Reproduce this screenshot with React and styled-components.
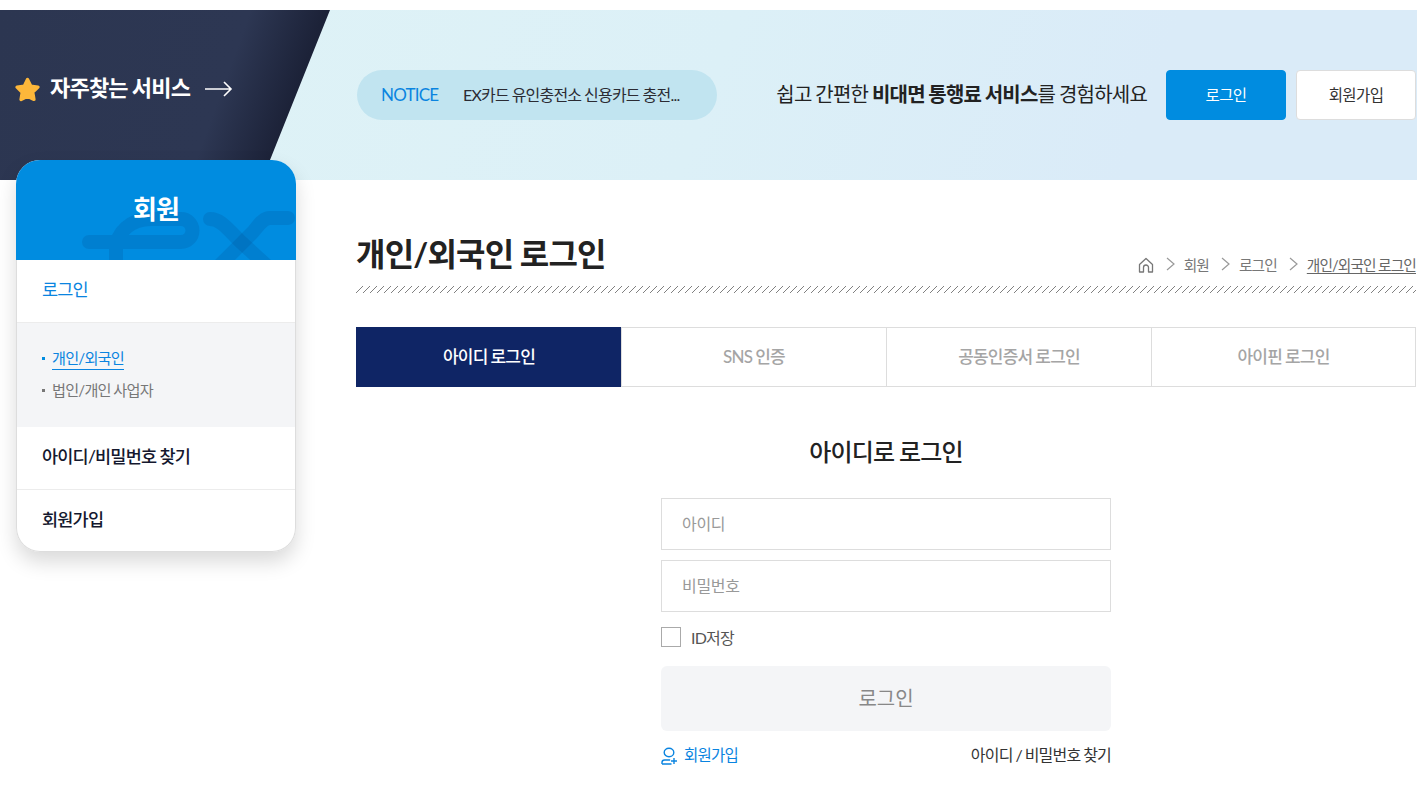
import React from "react";
import styled, {createGlobalStyle} from "styled-components";

const GlobalStyle = createGlobalStyle`
  html, body {
    margin: 0;
    padding: 0;
    background: #fff;
    overflow: hidden;
  }
  body {
    font-family: Lato, "Noto Sans CJK KR", sans-serif;
    color: #222;
    letter-spacing: -0.05em;
    word-spacing: -0.03em;
  }
  * { box-sizing: border-box; }
`

const Page = styled.div`
  width: 1417px;
  height: 785px;
  padding-top: 10px;
`

const Banner = styled.div`
  height: 170px;
  display: flex;
  align-items: center;
  background: linear-gradient(110deg, #dff3f6 0%, #dcf0f7 50%, #daebf8 80%, #daebf8 100%);
`

const Quick = styled.div`
  width: 330px;
  height: 100%;
  flex: none;
  display: flex;
  align-items: center;
  padding: 0 0 12px 13px;
  clip-path: polygon(0 0, 100% 0, 262px 100%, 0 100%);
  background: linear-gradient(110deg, #2c3651 0%, #2d3753 64%, #1c2238 83%, #1c2238 100%);
`

const QuickText = styled.span`
  margin-left: 8px;
  padding-bottom: 6px;
  font-size: 22px;
  font-weight: 700;
  color: #fff;
`

const QuickArrow = styled.svg`
  margin-left: 15px;
`

const Notice = styled.div`
  margin-left: 27px;
  width: 360px;
  height: 50px;
  flex: none;
  display: flex;
  align-items: center;
  padding: 0 24px 2px 24px;
  border-radius: 25px;
  background: #c1e4f0;
  font-size: 16px;
`

const NoticeLabel = styled.span`
  color: #0a84e0;
  width: 82px;
  flex: none;
  font-size: 17px;
`

const NoticeText = styled.span`
  color: #2b2b33;
  white-space: nowrap;
`

const Intro = styled.div`
  margin-left: auto;
  padding-bottom: 3px;
  font-size: 20px;
  color: #222;
  white-space: nowrap;

  b {
    font-weight: 700;
  }
`

const TopButton = styled.button`
  width: 120px;
  height: 50px;
  margin-left: ${p => (p.$primary ? "19px" : "10px")};
  padding-bottom: 3px;
  flex: none;
  border-radius: 4px;
  border: 1px solid ${p => (p.$primary ? "#008ce0" : "#ddd")};
  background: ${p => (p.$primary ? "#008ce0" : "#fff")};
  color: ${p => (p.$primary ? "#fff" : "#333")};
  font: inherit;
  font-size: 15.5px;
  letter-spacing: -0.04em;
`

const TopActions = styled.div`
  display: flex;
  padding-right: 1px;
`

const Body = styled.div`
  display: flex;
  align-items: flex-start;
`

const Side = styled.aside`
  width: 280px;
  flex: none;
  margin: -20px 0 0 16px;
  position: relative;
  border-radius: 24px;
  background: #fff;
  box-shadow: 0 10px 20px rgba(0, 0, 0, 0.15);
`

const SideHead = styled.div`
  height: 100px;
  position: relative;
  overflow: hidden;
  padding-top: 29px;
  border-radius: 24px 24px 0 0;
  background: #008ce0;
  color: #fff;
  font-size: 26px;
  font-weight: 700;
  line-height: 40px;
  text-align: center;
`

const SideLogo = styled.svg`
  position: absolute;
  left: 0;
  top: 0;
`

const SideTitle = styled.span`
  position: relative;
`

const SideList = styled.div`
  border: 1px solid #ddd;
  border-top: 0;
  border-radius: 0 0 24px 24px;
  overflow: hidden;
`

const SideRow = styled.div`
  height: ${p => p.$height}px;
  display: flex;
  align-items: center;
  padding: 0 0 ${p => p.$pad}px 25px;
  font-size: 17.5px;
  font-weight: ${p => (p.$active ? 400 : 500)};
  color: ${p => (p.$active ? "#0a84e0" : "#14182e")};
  border-bottom: ${p => (p.$line ? "1px solid #ececec" : "0")};
`

const SubList = styled.div`
  height: 104px;
  padding: 19px 0 0 25px;
  background: #f4f5f7;
`

const SubItem = styled.div`
  height: 32px;
  display: flex;
  align-items: center;
  font-size: 15.2px;
  color: ${p => (p.$active ? "#0a84e0" : "#777")};

  &::before {
    content: "";
    width: 3px;
    height: 3px;
    margin-right: 7px;
    background: ${p => (p.$active ? "#008ce0" : "#777")};
  }

  span {
    line-height: 22px;
    border-bottom: ${p => (p.$active ? "1px solid #0a84e0" : "1px solid transparent")};
  }
`

const Main = styled.main`
  width: 1060px;
  margin-left: 60px;
  padding-top: 51px;
`

const TitleRow = styled.div`
  display: flex;
  align-items: flex-start;
  justify-content: space-between;
  height: 55px;
`

const Title = styled.h1`
  margin: 0;
  font-size: 32px;
  font-weight: 700;
  line-height: 46px;
  color: #222;
`

const Crumbs = styled.div`
  display: flex;
  align-items: center;
  height: 24px;
  margin-top: 21px;
  font-size: 14.7px;
  letter-spacing: -0.06em;
  color: #777;
`

const CrumbHome = styled.svg`
  margin-bottom: -2px;
`

const CrumbArrow = styled.svg`
  margin: 0 9px 0 12px;
`

const CrumbLast = styled.span`
  color: #666;
  text-decoration: underline;
  text-underline-offset: 2px;
`

const Hatch = styled.div`
  height: 7px;
  background: linear-gradient(135deg, transparent 44%, #808080 44% 56%, transparent 56%) 0 0 / 7px 7px repeat-x;
`

const Tabs = styled.div`
  display: flex;
  margin-top: 34px;
`

const Tab = styled.div`
  width: 265px;
  height: 60px;
  display: flex;
  align-items: center;
  justify-content: center;
  padding-bottom: 3px;
  font-size: 17px;
  font-weight: 500;
  border: 1px solid ${p => (p.$active ? "#0f2565" : "#ddd")};
  border-right-width: ${p => (p.$last ? "1px" : "0")};
  background: ${p => (p.$active ? "#0f2565" : "#fff")};
  color: ${p => (p.$active ? "#fff" : "#a5a5a5")};
`

const LoginBox = styled.div`
  width: 450px;
  margin: 0 0 0 305px;
`

const LoginTitle = styled.h2`
  margin: 47px 0 28px;
  font-size: 24px;
  font-weight: 500;
  line-height: 36px;
  text-align: center;
  color: #222;
`

const Field = styled.input`
  display: block;
  width: 100%;
  height: 52px;
  margin-bottom: 10px;
  padding: 0 20px 2px;
  border: 1px solid #ddd;
  border-radius: 0;
  outline: 0;
  font: inherit;
  font-size: 16px;
  letter-spacing: -0.02em;

  &::placeholder {
    color: #999;
    opacity: 1;
  }
`

const SaveRow = styled.label`
  display: flex;
  align-items: center;
  margin-top: 15px;
  height: 20px;
  font-size: 16px;
  color: #555;
`

const CheckBox = styled.span`
  width: 20px;
  height: 20px;
  margin-right: 10px;
  border: 1px solid #aaa;
  background: #fff;
`

const LoginButton = styled.button`
  display: block;
  width: 100%;
  height: 65px;
  margin-top: 19px;
  padding-bottom: 3px;
  border: 0;
  border-radius: 6px;
  background: #f4f5f7;
  color: #888;
  font: inherit;
  font-size: 20px;
  letter-spacing: 0;
`

const LinkRow = styled.div`
  display: flex;
  align-items: center;
  justify-content: space-between;
  margin-top: 12px;
  height: 22px;
  font-size: 16px;
`

const JoinLink = styled.span`
  display: flex;
  align-items: center;
  gap: 5px;
  font-size: 15.5px;
  color: #0a84e0;
`

const FindLink = styled.span`
  color: #333;
`

const JoinIcon = styled.svg`
  margin-top: 4px;
`

const Star = () => (
  <svg width="29" height="29" viewBox="0 0 26 26">
    <path
      d="M13 4l2.9 5.9 6.5.9-4.7 4.6 1.1 6.5L13 19l-5.8 3 1.1-6.5-4.7-4.6 6.5-.9z"
      fill="#fdb73a"
      stroke="#fdb73a"
      strokeWidth="3"
      strokeLinejoin="round"
    />
  </svg>
)

const Chevron = () => (
  <CrumbArrow width="9" height="14" viewBox="0 0 9 14">
    <path d="M1 1l7 6-7 6" fill="none" stroke="#999" strokeWidth="1.2" />
  </CrumbArrow>
)

export default function App() {
  return (
    <Page>
      <GlobalStyle />
      <Banner>
        <Quick>
          <Star />
          <QuickText>자주찾는 서비스</QuickText>
          <QuickArrow width="28" height="16" viewBox="0 0 28 16">
            <path d="M0 8h26M19 1l7 7-7 7" fill="none" stroke="#fff" strokeWidth="1.6" />
          </QuickArrow>
        </Quick>
        <Notice>
          <NoticeLabel>NOTICE</NoticeLabel>
          <NoticeText>EX카드 유인충전소 신용카드 충전...</NoticeText>
        </Notice>
        <Intro>쉽고 간편한 <b>비대면 통행료 서비스</b>를 경험하세요</Intro>
        <TopActions>
          <TopButton $primary>로그인</TopButton>
          <TopButton>회원가입</TopButton>
        </TopActions>
      </Banner>
      <Body>
        <Side>
          <SideHead>
            <SideLogo width="280" height="100" viewBox="0 0 280 100">
              <g fill="none" stroke="#00407a" strokeOpacity="0.16" strokeWidth="14" strokeLinecap="round">
                <path d="M73 82H165A11.5 11.5 0 0 0 165 59H135C115 59 100 72 100 90V110" />
                <path d="M194 59C206 59 214 72 226 83L250 105" />
                <path d="M272 58H254C246 58 241 68 236 73L205 104" />
              </g>
            </SideLogo>
            <SideTitle>회원</SideTitle>
          </SideHead>
          <SideList>
            <SideRow $active $height={63} $pad={6} $line>로그인</SideRow>
            <SubList>
              <SubItem $active><span>개인/외국인</span></SubItem>
              <SubItem><span>법인/개인 사업자</span></SubItem>
            </SubList>
            <SideRow $height={63} $pad={6} $line>아이디/비밀번호 찾기</SideRow>
            <SideRow $height={61} $pad={4}>회원가입</SideRow>
          </SideList>
        </Side>
        <Main>
          <TitleRow>
            <Title>개인/외국인 로그인</Title>
            <Crumbs>
              <CrumbHome width="16" height="16" viewBox="0 0 16 16">
                <path d="M1.5 7.5L8 1.5l6.5 6V15h-4v-4.5a2.5 2.5 0 0 0-5 0V15h-4z" fill="none" stroke="#777" strokeWidth="1.3" strokeLinejoin="round" />
              </CrumbHome>
              <Chevron />
              <span>회원</span>
              <Chevron />
              <span>로그인</span>
              <Chevron />
              <CrumbLast>개인/외국인 로그인</CrumbLast>
            </Crumbs>
          </TitleRow>
          <Hatch />
          <Tabs>
            <Tab $active>아이디 로그인</Tab>
            <Tab>SNS 인증</Tab>
            <Tab>공동인증서 로그인</Tab>
            <Tab $last>아이핀 로그인</Tab>
          </Tabs>
          <LoginBox>
            <LoginTitle>아이디로 로그인</LoginTitle>
            <Field placeholder="아이디" />
            <Field placeholder="비밀번호" />
            <SaveRow><CheckBox />ID저장</SaveRow>
            <LoginButton>로그인</LoginButton>
            <LinkRow>
              <JoinLink>
                <JoinIcon width="18" height="18" viewBox="0 0 18 18">
                  <g fill="none" stroke="#0a84e0" strokeWidth="1.4">
                    <ellipse cx="8" cy="5.5" rx="4.8" ry="4.3" />
                    <path d="M1 17v-1.5c0-1.6 1-2.5 2.6-2.5h5.6M1 17h9.5M13 11v6M10 14h6" />
                  </g>
                </JoinIcon>
                회원가입
              </JoinLink>
              <FindLink>아이디 / 비밀번호 찾기</FindLink>
            </LinkRow>
          </LoginBox>
        </Main>
      </Body>
    </Page>
  )
}
